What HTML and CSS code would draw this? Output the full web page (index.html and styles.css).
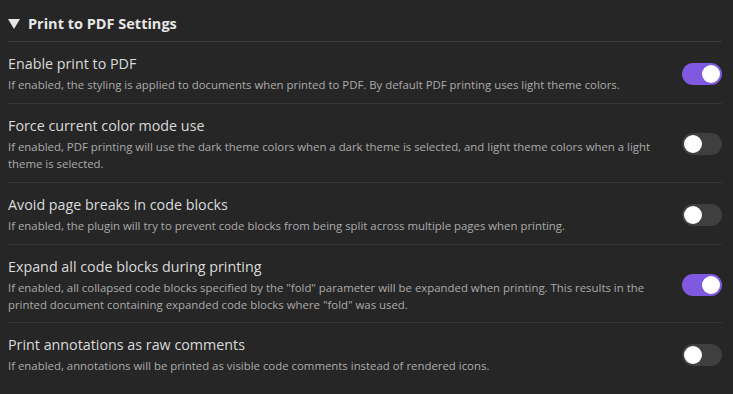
FILE: index.html
```html
<!DOCTYPE html>
<html lang="en">
<head>
    <meta charset="UTF-8">
    <meta name="viewport" content="width=device-width, initial-scale=1.0">
    <title>Print to PDF Settings</title>
    <link rel="stylesheet" href="styles.css">
</head>
<body>
    <div class="settings">
        <h3 class="heading">
            <svg class="caret" width="12" height="10" viewBox="0 0 12 10"><polygon points="0,0 12,0 6,10" fill="#e6e6e6"/></svg>
            Print to PDF Settings
        </h3>

        <div class="item">
            <div class="info">
                <div class="name">Enable print to PDF</div>
                <div class="desc">If enabled, the styling is applied to documents when printed to PDF. By default PDF printing uses light theme colors.</div>
            </div>
            <div class="toggle on"><span class="knob"></span></div>
        </div>

        <div class="item">
            <div class="info">
                <div class="name">Force current color mode use</div>
                <div class="desc">If enabled, PDF printing will use the dark theme colors when a dark theme is selected, and light theme colors when a light theme is selected.</div>
            </div>
            <div class="toggle"><span class="knob"></span></div>
        </div>

        <div class="item">
            <div class="info">
                <div class="name">Avoid page breaks in code blocks</div>
                <div class="desc">If enabled, the plugin will try to prevent code blocks from being split across multiple pages when printing.</div>
            </div>
            <div class="toggle"><span class="knob"></span></div>
        </div>

        <div class="item">
            <div class="info">
                <div class="name">Expand all code blocks during printing</div>
                <div class="desc">If enabled, all collapsed code blocks specified by the "fold" parameter will be expanded when printing. This results in the printed document containing expanded code blocks where "fold" was used.</div>
            </div>
            <div class="toggle on"><span class="knob"></span></div>
        </div>

        <div class="item">
            <div class="info">
                <div class="name">Print annotations as raw comments</div>
                <div class="desc">If enabled, annotations will be printed as visible code comments instead of rendered icons.</div>
            </div>
            <div class="toggle"><span class="knob"></span></div>
        </div>
    </div>
</body>
</html>
```

FILE: styles.css
```css
body{
    margin: 0;
    background: #262626;
    font-family: "Open Sans", "Noto Sans", sans-serif;
    color: #dadada;
}
.settings{
    padding: 0 11px 0 8px;
}
.heading{
    display: flex;
    align-items: center;
    gap: 8px;
    margin: 0;
    padding: 14px 0 7px;
    font-size: 14.5px;
    line-height: 20px;
    font-weight: bold;
    color: #e6e6e6;
    border-bottom: 1px solid #3a3a3a;
}
.caret{
    flex-shrink: 0;
}
.item{
    display: flex;
    align-items: center;
    padding: 12px 0 10px;
    border-top: 1px solid #363636;
}
.item:first-of-type{
    border-top: none;
}
.item:nth-of-type(4){
    padding-bottom: 9px;
}
.info{
    flex: 1;
    margin-right: 30px;
}
.name{
    font-size: 14.3px;
    line-height: 20px;
    color: #dadada;
}
.desc{
    margin-top: 2px;
    font-size: 11.4px;
    line-height: 17px;
    color: #ababab;
}
.toggle{
    width: 40px;
    height: 22px;
    border-radius: 11px;
    background: #3f3f3f;
    position: relative;
    flex-shrink: 0;
}
.toggle.on{
    background: #7f5ae0;
}
.knob{
    position: absolute;
    top: 2px;
    left: 2px;
    width: 18px;
    height: 18px;
    border-radius: 50%;
    background: #fff;
}
.toggle.on .knob{
    left: 20px;
}
```
